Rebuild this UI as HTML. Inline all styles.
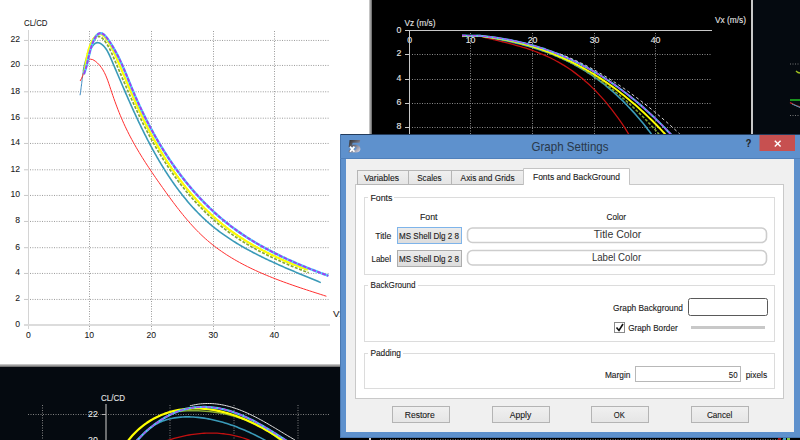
<!DOCTYPE html>
<html><head><meta charset="utf-8"><title>Graph Settings</title>
<style>html,body{margin:0;padding:0;width:800px;height:440px;overflow:hidden;background:#000}svg{display:block}text{font-family:"Liberation Sans", sans-serif}</style>
</head><body>
<svg width="800" height="440" viewBox="0 0 800 440">
<defs>
<linearGradient id="shR" x1="0" x2="1" y1="0" y2="0"><stop offset="0" stop-color="#d8d8d8"/><stop offset="1" stop-color="#606060"/></linearGradient>
<linearGradient id="shB" x1="0" x2="0" y1="0" y2="1"><stop offset="0" stop-color="#d8d8d8"/><stop offset="1" stop-color="#606060"/></linearGradient>
<linearGradient id="tabg" x1="0" x2="0" y1="0" y2="1"><stop offset="0" stop-color="#f0f0f0"/><stop offset="1" stop-color="#e5e5e5"/></linearGradient>
<linearGradient id="btng" x1="0" x2="0" y1="0" y2="1"><stop offset="0" stop-color="#f0f0f0"/><stop offset="1" stop-color="#e5e5e5"/></linearGradient>
<linearGradient id="fbox" x1="0" x2="0" y1="0" y2="1"><stop offset="0" stop-color="#ececec"/><stop offset="1" stop-color="#dcdcdc"/></linearGradient>
<linearGradient id="icon" x1="0" x2="1" y1="0" y2="1"><stop offset="0" stop-color="#2a2a2a"/><stop offset="0.45" stop-color="#6a6a78"/><stop offset="1" stop-color="#dcdcec"/></linearGradient>
</defs>
<rect x="0" y="0" width="800" height="440" fill="#000"/>
<rect x="0" y="0" width="369" height="364" fill="#fff"/>
<rect x="369" y="0" width="3" height="367" fill="url(#shR)"/>
<rect x="0" y="364" width="372" height="3" fill="url(#shB)"/>
<rect x="0" y="367" width="372" height="73" fill="#050a10"/>
<rect x="753" y="0" width="47" height="134" fill="#050a10"/>
<rect x="751" y="0" width="2" height="134" fill="#c8c8c8"/>
<line x1="30" y1="40.45" x2="329" y2="40.45" stroke="#9a9a9a" stroke-width="1" stroke-dasharray="1,1.4"/>
<line x1="24" y1="40.45" x2="28" y2="40.45" stroke="#c8c8c8" stroke-width="1"/>
<text x="20" y="42.45" font-size="9.9" fill="#1a1a1a" text-anchor="end" textLength="9.6" lengthAdjust="spacingAndGlyphs" stroke="#1a1a1a" stroke-width="0.08" >22</text>
<line x1="30" y1="65.45" x2="329" y2="65.45" stroke="#9a9a9a" stroke-width="1" stroke-dasharray="1,1.4"/>
<line x1="24" y1="65.45" x2="28" y2="65.45" stroke="#c8c8c8" stroke-width="1"/>
<text x="20" y="67.45" font-size="9.9" fill="#1a1a1a" text-anchor="end" textLength="9.6" lengthAdjust="spacingAndGlyphs" stroke="#1a1a1a" stroke-width="0.08" >20</text>
<line x1="30" y1="91.80" x2="329" y2="91.80" stroke="#9a9a9a" stroke-width="1" stroke-dasharray="1,1.4"/>
<line x1="24" y1="91.80" x2="28" y2="91.80" stroke="#c8c8c8" stroke-width="1"/>
<text x="20" y="93.8" font-size="9.9" fill="#1a1a1a" text-anchor="end" textLength="9.6" lengthAdjust="spacingAndGlyphs" stroke="#1a1a1a" stroke-width="0.08" >18</text>
<line x1="30" y1="118.20" x2="329" y2="118.20" stroke="#9a9a9a" stroke-width="1" stroke-dasharray="1,1.4"/>
<line x1="24" y1="118.20" x2="28" y2="118.20" stroke="#c8c8c8" stroke-width="1"/>
<text x="20" y="120.2" font-size="9.9" fill="#1a1a1a" text-anchor="end" textLength="9.6" lengthAdjust="spacingAndGlyphs" stroke="#1a1a1a" stroke-width="0.08" >16</text>
<line x1="30" y1="143.45" x2="329" y2="143.45" stroke="#9a9a9a" stroke-width="1" stroke-dasharray="1,1.4"/>
<line x1="24" y1="143.45" x2="28" y2="143.45" stroke="#c8c8c8" stroke-width="1"/>
<text x="20" y="145.45" font-size="9.9" fill="#1a1a1a" text-anchor="end" textLength="9.6" lengthAdjust="spacingAndGlyphs" stroke="#1a1a1a" stroke-width="0.08" >14</text>
<line x1="30" y1="169.80" x2="329" y2="169.80" stroke="#9a9a9a" stroke-width="1" stroke-dasharray="1,1.4"/>
<line x1="24" y1="169.80" x2="28" y2="169.80" stroke="#c8c8c8" stroke-width="1"/>
<text x="20" y="171.8" font-size="9.9" fill="#1a1a1a" text-anchor="end" textLength="9.6" lengthAdjust="spacingAndGlyphs" stroke="#1a1a1a" stroke-width="0.08" >12</text>
<line x1="30" y1="195.45" x2="329" y2="195.45" stroke="#9a9a9a" stroke-width="1" stroke-dasharray="1,1.4"/>
<line x1="24" y1="195.45" x2="28" y2="195.45" stroke="#c8c8c8" stroke-width="1"/>
<text x="20" y="197.45" font-size="9.9" fill="#1a1a1a" text-anchor="end" textLength="9.6" lengthAdjust="spacingAndGlyphs" stroke="#1a1a1a" stroke-width="0.08" >10</text>
<line x1="30" y1="221.45" x2="329" y2="221.45" stroke="#9a9a9a" stroke-width="1" stroke-dasharray="1,1.4"/>
<line x1="24" y1="221.45" x2="28" y2="221.45" stroke="#c8c8c8" stroke-width="1"/>
<text x="20" y="223.45" font-size="9.9" fill="#1a1a1a" text-anchor="end" textLength="4.8" lengthAdjust="spacingAndGlyphs" stroke="#1a1a1a" stroke-width="0.08" >8</text>
<line x1="30" y1="247.70" x2="329" y2="247.70" stroke="#9a9a9a" stroke-width="1" stroke-dasharray="1,1.4"/>
<line x1="24" y1="247.70" x2="28" y2="247.70" stroke="#c8c8c8" stroke-width="1"/>
<text x="20" y="249.7" font-size="9.9" fill="#1a1a1a" text-anchor="end" textLength="4.8" lengthAdjust="spacingAndGlyphs" stroke="#1a1a1a" stroke-width="0.08" >6</text>
<line x1="30" y1="273.45" x2="329" y2="273.45" stroke="#9a9a9a" stroke-width="1" stroke-dasharray="1,1.4"/>
<line x1="24" y1="273.45" x2="28" y2="273.45" stroke="#c8c8c8" stroke-width="1"/>
<text x="20" y="275.45" font-size="9.9" fill="#1a1a1a" text-anchor="end" textLength="4.8" lengthAdjust="spacingAndGlyphs" stroke="#1a1a1a" stroke-width="0.08" >4</text>
<line x1="30" y1="299.45" x2="329" y2="299.45" stroke="#9a9a9a" stroke-width="1" stroke-dasharray="1,1.4"/>
<line x1="24" y1="299.45" x2="28" y2="299.45" stroke="#c8c8c8" stroke-width="1"/>
<text x="20" y="301.45" font-size="9.9" fill="#1a1a1a" text-anchor="end" textLength="4.8" lengthAdjust="spacingAndGlyphs" stroke="#1a1a1a" stroke-width="0.08" >2</text>
<line x1="89.5" y1="31" x2="89.5" y2="330" stroke="#9a9a9a" stroke-width="1" stroke-dasharray="1,1.5"/>
<line x1="151.5" y1="31" x2="151.5" y2="330" stroke="#9a9a9a" stroke-width="1" stroke-dasharray="1,1.5"/>
<line x1="213.5" y1="31" x2="213.5" y2="330" stroke="#9a9a9a" stroke-width="1" stroke-dasharray="1,1.5"/>
<line x1="274.5" y1="31" x2="274.5" y2="330" stroke="#9a9a9a" stroke-width="1" stroke-dasharray="1,1.5"/>
<text x="28.3" y="337.7" font-size="9.9" fill="#1a1a1a" text-anchor="middle" textLength="4.8" lengthAdjust="spacingAndGlyphs" stroke="#1a1a1a" stroke-width="0.08" >0</text>
<text x="89.3" y="337.7" font-size="9.9" fill="#1a1a1a" text-anchor="middle" textLength="9.6" lengthAdjust="spacingAndGlyphs" stroke="#1a1a1a" stroke-width="0.08" >10</text>
<text x="151.3" y="337.7" font-size="9.9" fill="#1a1a1a" text-anchor="middle" textLength="9.6" lengthAdjust="spacingAndGlyphs" stroke="#1a1a1a" stroke-width="0.08" >20</text>
<text x="213.3" y="337.7" font-size="9.9" fill="#1a1a1a" text-anchor="middle" textLength="9.6" lengthAdjust="spacingAndGlyphs" stroke="#1a1a1a" stroke-width="0.08" >30</text>
<text x="274.3" y="337.7" font-size="9.9" fill="#1a1a1a" text-anchor="middle" textLength="9.6" lengthAdjust="spacingAndGlyphs" stroke="#1a1a1a" stroke-width="0.08" >40</text>
<text x="20" y="326.8" font-size="9.9" fill="#1a1a1a" text-anchor="end" textLength="4.8" lengthAdjust="spacingAndGlyphs" stroke="#1a1a1a" stroke-width="0.08" >0</text>
<line x1="28.5" y1="30" x2="28.5" y2="329" stroke="#d4d4d4" stroke-width="1"/>
<rect x="24" y="324" width="306" height="2" fill="#dcdcdc"/>
<text x="24" y="26.2" font-size="9.8" fill="#1a1a1a" text-anchor="start" textLength="23.5" lengthAdjust="spacingAndGlyphs" stroke="#1a1a1a" stroke-width="0.08" >CL/CD</text>
<text x="333" y="317" font-size="9.8" fill="#222" text-anchor="start" stroke="#222" stroke-width="0.08" >Vx</text>
<path d="M83.32,71.40 L83.56,70.04 L83.81,68.69 L84.08,67.34 L84.36,66.00 L84.67,64.66 L85.00,63.33 L85.35,62.01 L85.72,60.70 L86.12,59.39 L86.55,58.10 L87.00,56.82 L87.49,55.55 L88.00,54.30 L88.55,53.06 L89.13,51.84 L89.75,50.63 L90.41,49.44 L91.10,48.27 L91.84,47.12 L92.62,46.00 L93.44,44.97 L94.31,44.06 L95.24,43.34 L96.22,42.85 L97.27,42.66 L98.36,42.77 L99.46,43.10 L100.50,43.56 L101.48,44.13 L102.42,44.81 L103.30,45.59 L104.14,46.46 L104.94,47.41 L105.70,48.44 L106.43,49.53 L107.13,50.68 L107.80,51.88 L108.44,53.12 L109.06,54.40 L109.67,55.70 L110.26,57.02 L110.84,58.36 L111.41,59.69 L111.98,61.02 L112.55,62.35 L113.11,63.67 L113.67,64.98 L114.23,66.28 L114.78,67.58 L115.33,68.88 L115.88,70.17 L116.43,71.45 L116.97,72.73 L117.51,74.00 L118.05,75.27 L118.59,76.53 L119.13,77.79 L119.66,79.05 L120.20,80.30 L120.73,81.54 L121.26,82.78 L121.79,84.02 L122.32,85.26 L122.85,86.49 L123.38,87.72 L123.91,88.94 L124.44,90.16 L124.97,91.38 L125.49,92.59 L126.02,93.81 L126.55,95.02 L127.08,96.23 L127.60,97.43 L128.13,98.64 L128.66,99.84 L129.19,101.04 L129.73,102.24 L130.26,103.44 L130.79,104.63 L131.33,105.83 L131.87,107.02 L132.40,108.22 L132.94,109.41 L133.49,110.61 L134.03,111.80 L134.58,112.99 L135.13,114.18 L135.68,115.38 L136.23,116.57 L136.79,117.76 L137.35,118.96 L137.91,120.15 L138.47,121.35 L139.04,122.55 L139.61,123.74 L140.19,124.94 L140.76,126.14 L141.34,127.33 L141.93,128.53 L142.52,129.73 L143.11,130.93 L143.70,132.13 L144.30,133.32 L144.90,134.52 L145.50,135.72 L146.11,136.91 L146.72,138.11 L147.33,139.30 L147.95,140.50 L148.57,141.69 L149.19,142.88 L149.82,144.07 L150.45,145.26 L151.09,146.45 L151.73,147.64 L152.37,148.82 L153.02,150.01 L153.67,151.19 L154.32,152.37 L154.98,153.55 L155.64,154.73 L156.31,155.90 L156.98,157.08 L157.66,158.25 L158.33,159.42 L159.02,160.59 L159.70,161.75 L160.40,162.91 L161.09,164.07 L161.79,165.23 L162.50,166.39 L163.21,167.54 L163.92,168.69 L164.64,169.83 L165.36,170.98 L166.09,172.12 L166.82,173.25 L167.55,174.39 L168.29,175.52 L169.04,176.64 L169.79,177.77 L170.54,178.89 L171.30,180.00 L172.07,181.11 L172.84,182.22 L173.61,183.33 L174.39,184.43 L175.17,185.52 L175.96,186.61 L176.76,187.70 L177.56,188.78 L178.36,189.86 L179.17,190.94 L179.98,192.01 L180.80,193.07 L181.63,194.13 L182.46,195.18 L183.30,196.23 L184.14,197.28 L184.98,198.32 L185.84,199.35 L186.69,200.38 L187.56,201.40 L188.43,202.42 L189.30,203.43 L190.18,204.44 L191.07,205.44 L191.96,206.43 L192.85,207.42 L193.76,208.40 L194.67,209.38 L195.58,210.35 L196.50,211.31 L197.43,212.27 L198.36,213.22 L199.30,214.17 L200.24,215.10 L201.19,216.03 L202.15,216.96 L203.11,217.88 L204.08,218.79 L205.06,219.69 L206.04,220.58 L207.03,221.47 L208.02,222.35 L209.02,223.23 L210.03,224.09 L211.04,224.95 L212.06,225.80 L213.09,226.65 L214.12,227.48 L215.16,228.31 L216.20,229.13 L217.26,229.95 L218.31,230.75 L219.37,231.55 L220.44,232.34 L221.52,233.13 L222.60,233.91 L223.68,234.68 L224.77,235.45 L225.87,236.20 L226.97,236.96 L228.07,237.70 L229.18,238.44 L230.30,239.18 L231.42,239.90 L232.54,240.63 L233.67,241.34 L234.80,242.05 L235.94,242.75 L237.08,243.45 L238.23,244.14 L239.38,244.83 L240.54,245.51 L241.69,246.19 L242.86,246.86 L244.02,247.52 L245.19,248.18 L246.37,248.84 L247.54,249.49 L248.72,250.13 L249.91,250.77 L251.09,251.41 L252.28,252.04 L253.47,252.67 L254.67,253.29 L255.87,253.91 L257.07,254.52 L258.27,255.13 L259.48,255.74 L260.68,256.34 L261.89,256.94 L263.11,257.53 L264.32,258.12 L265.54,258.70 L266.76,259.29 L267.98,259.87 L269.20,260.44 L270.42,261.01 L271.65,261.58 L272.87,262.15 L274.10,262.71 L275.33,263.27 L276.56,263.83 L277.79,264.38 L279.03,264.93 L280.26,265.48 L281.49,266.02 L282.73,266.57 L283.96,267.11 L285.20,267.65 L286.43,268.18 L287.67,268.72 L288.91,269.25 L290.14,269.78 L291.38,270.31 L292.62,270.83 L293.86,271.36 L295.09,271.88 L296.33,272.40 L297.56,272.92 L298.80,273.44 L300.03,273.96 L301.27,274.47 L302.50,274.99 L303.73,275.50 L304.96,276.01 L306.19,276.52 L307.42,277.03 L308.65,277.54 L309.87,278.05 L311.10,278.56 L312.32,279.07 L313.54,279.58 L314.76,280.09 L315.98,280.59 L317.19,281.10 L318.40,281.61 L319.62,282.12 L320.82,282.62" fill="none" stroke="#3a9ab8" stroke-width="1.6" stroke-linejoin="round" opacity="1"/>
<path d="M80.03,95.22 L80.24,93.98 L80.44,92.72 L80.63,91.44 L80.81,90.16 L80.98,88.86 L81.15,87.55 L81.32,86.24 L81.48,84.91 L81.65,83.58 L81.81,82.24 L81.98,80.89 L82.15,79.54 L82.32,78.19 L82.50,76.83 L82.69,75.47 L82.89,74.12 L83.10,72.76 L83.32,71.40 L83.56,70.04 L83.81,68.69 L84.08,67.34" fill="none" stroke="#3a88c0" stroke-width="1.0" stroke-linejoin="round" opacity="1"/>
<path d="M80.10,80.98 L81.68,78.25 L82.75,75.52 L83.53,72.76 L84.23,69.90 L85.10,66.88 L86.34,63.67 L88.08,60.71 L90.26,59.20 L92.73,59.59 L95.22,61.11 L97.48,63.01 L99.50,65.12 L101.30,67.41 L102.90,69.86 L104.33,72.45 L105.62,75.16 L106.79,77.96 L107.87,80.82 L108.89,83.74 L109.87,86.68 L110.83,89.63 L111.81,92.56 L112.80,95.46 L113.81,98.36 L114.84,101.23 L115.88,104.08 L116.95,106.92 L118.03,109.74 L119.14,112.54 L120.28,115.32 L121.44,118.08 L122.63,120.83 L123.84,123.55 L125.09,126.26 L126.37,128.96 L127.69,131.63 L129.03,134.29 L130.40,136.93 L131.80,139.56 L133.23,142.18 L134.69,144.78 L136.17,147.37 L137.68,149.94 L139.21,152.50 L140.76,155.06 L142.33,157.60 L143.93,160.14 L145.54,162.66 L147.18,165.18 L148.83,167.69 L150.49,170.19 L152.18,172.69 L153.88,175.18 L155.59,177.67 L157.31,180.16 L159.05,182.64 L160.79,185.12 L162.55,187.59 L164.31,190.07 L166.09,192.55 L167.87,195.02 L169.66,197.48 L171.47,199.94 L173.29,202.39 L175.13,204.83 L176.98,207.25 L178.85,209.66 L180.74,212.05 L182.64,214.42 L184.57,216.77 L186.52,219.09 L188.50,221.39 L190.49,223.66 L192.52,225.90 L194.57,228.10 L196.65,230.28 L198.76,232.41 L200.90,234.51 L203.08,236.57 L205.28,238.58 L207.52,240.56 L209.80,242.48 L212.11,244.36 L214.45,246.20 L216.82,248.00 L219.23,249.75 L221.67,251.46 L224.13,253.14 L226.62,254.77 L229.14,256.37 L231.69,257.93 L234.26,259.46 L236.85,260.95 L239.47,262.41 L242.11,263.83 L244.77,265.22 L247.45,266.58 L250.14,267.92 L252.86,269.22 L255.59,270.50 L258.34,271.75 L261.10,272.97 L263.88,274.17 L266.67,275.34 L269.47,276.49 L272.28,277.62 L275.11,278.73 L277.94,279.82 L280.77,280.89 L283.62,281.95 L286.47,282.98 L289.32,284.00 L292.18,285.01 L295.04,286.00 L297.91,286.97 L300.77,287.94 L303.63,288.89 L306.50,289.84 L309.35,290.77 L312.21,291.70 L315.06,292.62 L317.91,293.53 L320.75,294.44 L323.58,295.35 L326.40,296.25" fill="none" stroke="#ff3030" stroke-width="1" stroke-linejoin="round" opacity="1"/>
<path d="M83.45,73.97 L84.32,71.12 L85.07,68.26 L85.72,65.39 L86.33,62.51 L86.93,59.63 L87.56,56.74 L88.27,53.86 L89.10,50.99 L90.09,48.12 L91.28,45.27 L92.72,42.44 L94.43,39.67 L96.37,37.40 L98.44,36.30 L100.56,36.81 L102.63,38.52 L104.57,40.79 L106.32,43.22 L107.92,45.75 L109.38,48.37 L110.73,51.05 L112.00,53.79 L113.21,56.56 L114.40,59.34 L115.57,62.12 L116.75,64.89 L117.92,67.66 L119.09,70.43 L120.26,73.19 L121.43,75.94 L122.61,78.69 L123.79,81.44 L124.96,84.18 L126.15,86.91 L127.34,89.64 L128.53,92.36 L129.73,95.07 L130.94,97.78 L132.15,100.49 L133.38,103.18 L134.61,105.87 L135.85,108.56 L137.11,111.24 L138.37,113.91 L139.65,116.57 L140.94,119.23 L142.25,121.88 L143.57,124.52 L144.91,127.15 L146.26,129.78 L147.63,132.40 L149.02,135.01 L150.43,137.62 L151.85,140.21 L153.30,142.80 L154.77,145.38 L156.26,147.95 L157.77,150.51 L159.30,153.06 L160.85,155.60 L162.42,158.13 L164.02,160.64 L165.63,163.14 L167.27,165.63 L168.93,168.11 L170.61,170.57 L172.32,173.01 L174.04,175.44 L175.79,177.85 L177.56,180.24 L179.36,182.62 L181.17,184.98 L183.01,187.32 L184.88,189.63 L186.76,191.93 L188.67,194.21 L190.61,196.47 L192.56,198.70 L194.54,200.91 L196.55,203.10 L198.58,205.26 L200.63,207.40 L202.71,209.52 L204.81,211.61 L206.94,213.67 L209.09,215.70 L211.27,217.71 L213.48,219.69 L215.70,221.64 L217.96,223.56 L220.24,225.45 L222.54,227.31 L224.87,229.14 L227.23,230.93 L229.61,232.70 L232.02,234.43 L234.46,236.12 L236.92,237.79 L239.40,239.42 L241.91,241.02 L244.44,242.59 L246.98,244.13 L249.55,245.64 L252.14,247.13 L254.74,248.58 L257.36,250.01 L259.99,251.41 L262.64,252.78 L265.30,254.13 L267.97,255.46 L270.65,256.76 L273.35,258.03 L276.05,259.28 L278.76,260.52 L281.47,261.72 L284.19,262.91 L286.91,264.08 L289.64,265.23 L292.37,266.35 L295.09,267.46 L297.82,268.55 L300.55,269.63 L303.28,270.69 L306.00,271.73 L308.71,272.75" fill="none" stroke="#88aa33" stroke-width="1.7" stroke-dasharray="3,1.5" stroke-linejoin="round" opacity="1"/>
<path d="M83.65,73.97 L84.28,71.40 L84.81,68.85 L85.28,66.31 L85.71,63.78 L86.12,61.26 L86.54,58.74 L87.01,56.22 L87.55,53.69 L88.19,51.16 L88.96,48.61 L89.88,46.04 L90.98,43.45 L92.28,40.86 L93.77,38.42 L95.40,36.33 L97.14,34.78 L98.94,33.98 L100.79,34.10 L102.64,35.13 L104.44,36.83 L106.17,38.92 L107.77,41.16 L109.25,43.43 L110.62,45.75 L111.90,48.09 L113.10,50.45 L114.23,52.84 L115.32,55.24 L116.37,57.65 L117.41,60.06 L118.44,62.47 L119.47,64.88 L120.49,67.29 L121.51,69.70 L122.53,72.11 L123.55,74.52 L124.56,76.92 L125.58,79.33 L126.60,81.73 L127.62,84.13 L128.64,86.52 L129.67,88.92 L130.70,91.31 L131.73,93.70 L132.77,96.08 L133.82,98.46 L134.87,100.84 L135.93,103.22 L137.00,105.59 L138.08,107.95 L139.17,110.32 L140.27,112.67 L141.39,115.03 L142.51,117.38 L143.65,119.72 L144.80,122.06 L145.97,124.39 L147.15,126.72 L148.34,129.04 L149.55,131.36 L150.77,133.66 L152.01,135.97 L153.26,138.26 L154.53,140.54 L155.81,142.82 L157.11,145.09 L158.42,147.35 L159.75,149.60 L161.09,151.84 L162.45,154.07 L163.82,156.29 L165.21,158.50 L166.62,160.70 L168.04,162.88 L169.48,165.06 L170.94,167.22 L172.41,169.37 L173.90,171.51 L175.41,173.63 L176.93,175.74 L178.47,177.84 L180.03,179.92 L181.61,181.99 L183.20,184.05 L184.81,186.09 L186.44,188.11 L188.09,190.12 L189.75,192.11 L191.44,194.08 L193.14,196.04 L194.86,197.98 L196.60,199.90 L198.36,201.81 L200.14,203.70 L201.94,205.56 L203.76,207.41 L205.59,209.24 L207.45,211.05 L209.32,212.84 L211.22,214.61 L213.14,216.36 L215.07,218.09 L217.03,219.80 L219.01,221.48 L221.01,223.14 L223.03,224.78 L225.07,226.40 L227.13,228.00 L229.21,229.57 L231.31,231.11 L233.44,232.64 L235.58,234.14 L237.75,235.61 L239.93,237.06 L242.14,238.49 L244.36,239.90 L246.60,241.28 L248.85,242.64 L251.12,243.98 L253.40,245.29 L255.69,246.58 L258.00,247.85 L260.32,249.10 L262.65,250.33 L264.99,251.54 L267.34,252.72 L269.70,253.88 L272.06,255.03 L274.43,256.15 L276.81,257.25 L279.19,258.33 L281.57,259.40 L283.96,260.44 L286.35,261.46 L288.75,262.46 L291.14,263.45 L293.53,264.41 L295.93,265.36 L298.32,266.28 L300.71,267.19 L303.09,268.08 L305.47,268.96 L307.85,269.81" fill="none" stroke="#2040a0" stroke-width="1.5" stroke-dasharray="2,2" stroke-linejoin="round" opacity="1"/>
<path d="M83.65,73.97 L84.28,71.40 L84.81,68.85 L85.28,66.31 L85.71,63.78 L86.12,61.26 L86.54,58.74 L87.01,56.22 L87.55,53.69 L88.19,51.16 L88.96,48.61 L89.88,46.04 L90.98,43.45 L92.28,40.86 L93.77,38.42 L95.40,36.33 L97.14,34.78 L98.94,33.98 L100.79,34.10 L102.64,35.13 L104.44,36.83 L106.17,38.92 L107.77,41.16 L109.25,43.43 L110.62,45.75 L111.90,48.09 L113.10,50.45 L114.23,52.84 L115.32,55.24 L116.37,57.65 L117.41,60.06 L118.44,62.47 L119.47,64.88 L120.49,67.29 L121.51,69.70 L122.53,72.11 L123.55,74.52 L124.56,76.92 L125.58,79.33 L126.60,81.73 L127.62,84.13 L128.64,86.52 L129.67,88.92 L130.70,91.31 L131.73,93.70 L132.77,96.08 L133.82,98.46 L134.87,100.84 L135.93,103.22 L137.00,105.59 L138.08,107.95 L139.17,110.32 L140.27,112.67 L141.39,115.03 L142.51,117.38 L143.65,119.72 L144.80,122.06 L145.97,124.39 L147.15,126.72 L148.34,129.04 L149.55,131.36 L150.77,133.66 L152.01,135.97 L153.26,138.26 L154.53,140.54 L155.81,142.82 L157.11,145.09 L158.42,147.35 L159.75,149.60 L161.09,151.84 L162.45,154.07 L163.82,156.29 L165.21,158.50 L166.62,160.70 L168.04,162.88 L169.48,165.06 L170.94,167.22 L172.41,169.37 L173.90,171.51 L175.41,173.63 L176.93,175.74 L178.47,177.84 L180.03,179.92 L181.61,181.99 L183.20,184.05 L184.81,186.09 L186.44,188.11 L188.09,190.12 L189.75,192.11 L191.44,194.08 L193.14,196.04 L194.86,197.98 L196.60,199.90 L198.36,201.81 L200.14,203.70 L201.94,205.56 L203.76,207.41 L205.59,209.24 L207.45,211.05 L209.32,212.84 L211.22,214.61 L213.14,216.36 L215.07,218.09 L217.03,219.80 L219.01,221.48 L221.01,223.14 L223.03,224.78 L225.07,226.40 L227.13,228.00 L229.21,229.57 L231.31,231.11 L233.44,232.64 L235.58,234.14 L237.75,235.61 L239.93,237.06 L242.14,238.49 L244.36,239.90 L246.60,241.28 L248.85,242.64 L251.12,243.98 L253.40,245.29 L255.69,246.58 L258.00,247.85 L260.32,249.10 L262.65,250.33 L264.99,251.54 L267.34,252.72 L269.70,253.88 L272.06,255.03 L274.43,256.15 L276.81,257.25 L279.19,258.33 L281.57,259.40 L283.96,260.44 L286.35,261.46 L288.75,262.46 L291.14,263.45 L293.53,264.41 L295.93,265.36 L298.32,266.28 L300.71,267.19 L303.09,268.08 L305.47,268.96 L307.85,269.81" fill="none" stroke="#ffff00" stroke-width="2.1" stroke-linejoin="round" opacity="1"/>
<path d="M83.91,74.06 L84.91,71.30 L85.75,68.67 L86.47,66.16 L87.09,63.72 L87.65,61.33 L88.19,58.96 L88.73,56.57 L89.30,54.13 L89.93,51.62 L90.67,48.99 L91.53,46.23 L92.54,43.33 L93.72,40.45 L95.06,37.79 L96.56,35.57 L98.21,33.97 L100.01,33.21 L101.82,33.37 L103.59,34.36 L105.33,35.96 L107.01,37.99 L108.63,40.25 L110.18,42.57 L111.67,44.90 L113.09,47.24 L114.46,49.58 L115.77,51.94 L117.03,54.31 L118.24,56.68 L119.42,59.06 L120.55,61.45 L121.65,63.84 L122.72,66.23 L123.77,68.63 L124.79,71.04 L125.80,73.45 L126.79,75.86 L127.78,78.27 L128.76,80.68 L129.74,83.09 L130.72,85.50 L131.71,87.91 L132.72,90.32 L133.73,92.73 L134.77,95.14 L135.81,97.54 L136.88,99.94 L137.95,102.34 L139.05,104.73 L140.15,107.12 L141.28,109.50 L142.41,111.88 L143.57,114.25 L144.73,116.62 L145.92,118.98 L147.12,121.34 L148.33,123.69 L149.56,126.03 L150.81,128.37 L152.07,130.70 L153.34,133.02 L154.64,135.33 L155.95,137.64 L157.27,139.93 L158.61,142.22 L159.97,144.50 L161.34,146.77 L162.73,149.02 L164.14,151.27 L165.56,153.51 L167.00,155.73 L168.45,157.95 L169.92,160.15 L171.41,162.34 L172.92,164.52 L174.44,166.68 L175.97,168.83 L177.53,170.97 L179.10,173.10 L180.69,175.21 L182.30,177.31 L183.92,179.39 L185.56,181.45 L187.22,183.51 L188.89,185.54 L190.59,187.56 L192.30,189.57 L194.02,191.55 L195.77,193.52 L197.53,195.47 L199.31,197.41 L201.11,199.32 L202.92,201.22 L204.76,203.10 L206.61,204.96 L208.48,206.80 L210.37,208.63 L212.27,210.43 L214.20,212.21 L216.14,213.97 L218.10,215.71 L220.08,217.43 L222.08,219.12 L224.10,220.80 L226.13,222.45 L228.19,224.08 L230.26,225.68 L232.35,227.27 L234.46,228.83 L236.59,230.36 L238.74,231.88 L240.90,233.37 L243.08,234.84 L245.27,236.29 L247.48,237.71 L249.71,239.12 L251.95,240.50 L254.21,241.87 L256.47,243.21 L258.75,244.54 L261.05,245.84 L263.35,247.13 L265.67,248.40 L268.00,249.65 L270.34,250.88 L272.69,252.09 L275.05,253.28 L277.42,254.46 L279.79,255.62 L282.18,256.77 L284.57,257.90 L286.97,259.01 L289.38,260.11 L291.79,261.19 L294.21,262.25 L296.63,263.31 L299.06,264.34 L301.49,265.37 L303.93,266.38 L306.36,267.37 L308.81,268.35 L311.25,269.33 L313.70,270.28 L316.14,271.23 L318.59,272.16 L321.04,273.08 L323.48,274.00 L325.93,274.90 L328.38,275.79" fill="none" stroke="#40e0ff" stroke-width="2.5" stroke-linejoin="round" opacity="1"/>
<path d="M83.91,74.06 L84.91,71.30 L85.75,68.67 L86.47,66.16 L87.09,63.72 L87.65,61.33 L88.19,58.96 L88.73,56.57 L89.30,54.13 L89.93,51.62 L90.67,48.99 L91.53,46.23 L92.54,43.33 L93.72,40.45 L95.06,37.79 L96.56,35.57 L98.21,33.97 L100.01,33.21 L101.82,33.37 L103.59,34.36 L105.33,35.96 L107.01,37.99 L108.63,40.25 L110.18,42.57 L111.67,44.90 L113.09,47.24 L114.46,49.58 L115.77,51.94 L117.03,54.31 L118.24,56.68 L119.42,59.06 L120.55,61.45 L121.65,63.84 L122.72,66.23 L123.77,68.63 L124.79,71.04 L125.80,73.45 L126.79,75.86 L127.78,78.27 L128.76,80.68 L129.74,83.09 L130.72,85.50 L131.71,87.91 L132.72,90.32 L133.73,92.73 L134.77,95.14 L135.81,97.54 L136.88,99.94 L137.95,102.34 L139.05,104.73 L140.15,107.12 L141.28,109.50 L142.41,111.88 L143.57,114.25 L144.73,116.62 L145.92,118.98 L147.12,121.34 L148.33,123.69 L149.56,126.03 L150.81,128.37 L152.07,130.70 L153.34,133.02 L154.64,135.33 L155.95,137.64 L157.27,139.93 L158.61,142.22 L159.97,144.50 L161.34,146.77 L162.73,149.02 L164.14,151.27 L165.56,153.51 L167.00,155.73 L168.45,157.95 L169.92,160.15 L171.41,162.34 L172.92,164.52 L174.44,166.68 L175.97,168.83 L177.53,170.97 L179.10,173.10 L180.69,175.21 L182.30,177.31 L183.92,179.39 L185.56,181.45 L187.22,183.51 L188.89,185.54 L190.59,187.56 L192.30,189.57 L194.02,191.55 L195.77,193.52 L197.53,195.47 L199.31,197.41 L201.11,199.32 L202.92,201.22 L204.76,203.10 L206.61,204.96 L208.48,206.80 L210.37,208.63 L212.27,210.43 L214.20,212.21 L216.14,213.97 L218.10,215.71 L220.08,217.43 L222.08,219.12 L224.10,220.80 L226.13,222.45 L228.19,224.08 L230.26,225.68 L232.35,227.27 L234.46,228.83 L236.59,230.36 L238.74,231.88 L240.90,233.37 L243.08,234.84 L245.27,236.29 L247.48,237.71 L249.71,239.12 L251.95,240.50 L254.21,241.87 L256.47,243.21 L258.75,244.54 L261.05,245.84 L263.35,247.13 L265.67,248.40 L268.00,249.65 L270.34,250.88 L272.69,252.09 L275.05,253.28 L277.42,254.46 L279.79,255.62 L282.18,256.77 L284.57,257.90 L286.97,259.01 L289.38,260.11 L291.79,261.19 L294.21,262.25 L296.63,263.31 L299.06,264.34 L301.49,265.37 L303.93,266.38 L306.36,267.37 L308.81,268.35 L311.25,269.33 L313.70,270.28 L316.14,271.23 L318.59,272.16 L321.04,273.08 L323.48,274.00 L325.93,274.90 L328.38,275.79" fill="none" stroke="#a040f0" stroke-width="1.9" stroke-dasharray="4,1.2" stroke-linejoin="round" opacity="1"/>
<line x1="412" y1="54.5" x2="711" y2="54.5" stroke="#8a8a8a" stroke-width="1" stroke-dasharray="1,1.5"/>
<line x1="405" y1="54.5" x2="410" y2="54.5" stroke="#c8c8c8" stroke-width="1"/>
<text x="401.5" y="56.1" font-size="9.5" fill="#e8e8e8" text-anchor="end" textLength="4.9" lengthAdjust="spacingAndGlyphs" stroke="#e8e8e8" stroke-width="0.1" >2</text>
<line x1="412" y1="79.5" x2="711" y2="79.5" stroke="#8a8a8a" stroke-width="1" stroke-dasharray="1,1.5"/>
<line x1="405" y1="79.5" x2="410" y2="79.5" stroke="#c8c8c8" stroke-width="1"/>
<text x="401.5" y="81.1" font-size="9.5" fill="#e8e8e8" text-anchor="end" textLength="4.9" lengthAdjust="spacingAndGlyphs" stroke="#e8e8e8" stroke-width="0.1" >4</text>
<line x1="412" y1="103.5" x2="711" y2="103.5" stroke="#8a8a8a" stroke-width="1" stroke-dasharray="1,1.5"/>
<line x1="405" y1="103.5" x2="410" y2="103.5" stroke="#c8c8c8" stroke-width="1"/>
<text x="401.5" y="105.1" font-size="9.5" fill="#e8e8e8" text-anchor="end" textLength="4.9" lengthAdjust="spacingAndGlyphs" stroke="#e8e8e8" stroke-width="0.1" >6</text>
<line x1="412" y1="127.5" x2="711" y2="127.5" stroke="#8a8a8a" stroke-width="1" stroke-dasharray="1,1.5"/>
<line x1="405" y1="127.5" x2="410" y2="127.5" stroke="#c8c8c8" stroke-width="1"/>
<text x="401.5" y="129.1" font-size="9.5" fill="#e8e8e8" text-anchor="end" textLength="4.9" lengthAdjust="spacingAndGlyphs" stroke="#e8e8e8" stroke-width="0.1" >8</text>
<text x="401.5" y="32.8" font-size="9.5" fill="#e8e8e8" text-anchor="end" textLength="4.9" lengthAdjust="spacingAndGlyphs" stroke="#e8e8e8" stroke-width="0.1" >0</text>
<line x1="470.5" y1="33" x2="470.5" y2="134" stroke="#8a8a8a" stroke-width="1" stroke-dasharray="1,1.5"/>
<line x1="532.5" y1="33" x2="532.5" y2="134" stroke="#8a8a8a" stroke-width="1" stroke-dasharray="1,1.5"/>
<line x1="594.5" y1="33" x2="594.5" y2="134" stroke="#8a8a8a" stroke-width="1" stroke-dasharray="1,1.5"/>
<line x1="655.5" y1="33" x2="655.5" y2="134" stroke="#8a8a8a" stroke-width="1" stroke-dasharray="1,1.5"/>
<text x="409.6" y="43" font-size="9.5" fill="#e8e8e8" text-anchor="middle" textLength="4.9" lengthAdjust="spacingAndGlyphs" stroke="#e8e8e8" stroke-width="0.1" >0</text>
<text x="470.6" y="43" font-size="9.5" fill="#e8e8e8" text-anchor="middle" textLength="9.8" lengthAdjust="spacingAndGlyphs" stroke="#e8e8e8" stroke-width="0.1" >10</text>
<text x="532.6" y="43" font-size="9.5" fill="#e8e8e8" text-anchor="middle" textLength="9.8" lengthAdjust="spacingAndGlyphs" stroke="#e8e8e8" stroke-width="0.1" >20</text>
<text x="594.6" y="43" font-size="9.5" fill="#e8e8e8" text-anchor="middle" textLength="9.8" lengthAdjust="spacingAndGlyphs" stroke="#e8e8e8" stroke-width="0.1" >30</text>
<text x="655.6" y="43" font-size="9.5" fill="#e8e8e8" text-anchor="middle" textLength="9.8" lengthAdjust="spacingAndGlyphs" stroke="#e8e8e8" stroke-width="0.1" >40</text>
<line x1="409.5" y1="30" x2="409.5" y2="134" stroke="#c8c8c8" stroke-width="1"/>
<line x1="405" y1="30.5" x2="712" y2="30.5" stroke="#c8c8c8" stroke-width="1"/>
<text x="404.5" y="26" font-size="9.5" fill="#e8e8e8" text-anchor="start" textLength="31" lengthAdjust="spacingAndGlyphs" stroke="#e8e8e8" stroke-width="0.1" >Vz (m/s)</text>
<text x="715" y="23" font-size="9.5" fill="#e8e8e8" text-anchor="start" textLength="31" lengthAdjust="spacingAndGlyphs" stroke="#e8e8e8" stroke-width="0.1" >Vx (m/s)</text>
<path d="M462.00,36.50 C465.00,36.47 476.50,36.23 480.00,36.33 C483.50,36.42 482.00,36.82 483.00,37.07 C484.00,37.31 485.00,37.55 486.00,37.79 C487.00,38.03 488.00,38.27 489.00,38.51 C490.00,38.75 491.00,38.99 492.00,39.22 C493.00,39.46 494.00,39.70 495.00,39.94 C496.00,40.18 497.00,40.42 498.00,40.66 C499.00,40.90 500.00,41.14 501.00,41.38 C502.00,41.63 503.00,41.87 504.00,42.12 C505.00,42.37 506.00,42.62 507.00,42.87 C508.00,43.12 509.00,43.38 510.00,43.64 C511.00,43.90 512.00,44.17 513.00,44.44 C514.00,44.71 515.00,44.98 516.00,45.26 C517.00,45.54 518.00,45.82 519.00,46.12 C520.00,46.41 521.00,46.70 522.00,47.01 C523.00,47.31 524.00,47.62 525.00,47.93 C526.00,48.25 527.00,48.57 528.00,48.91 C529.00,49.24 530.00,49.58 531.00,49.93 C532.00,50.28 533.00,50.63 534.00,51.00 C535.00,51.36 536.00,51.74 537.00,52.12 C538.00,52.51 539.00,52.90 540.00,53.31 C541.00,53.72 542.00,54.13 543.00,54.56 C544.00,54.99 545.00,55.43 546.00,55.88 C547.00,56.33 548.00,56.79 549.00,57.26 C550.00,57.74 551.00,58.22 552.00,58.73 C553.00,59.23 554.00,59.74 555.00,60.27 C556.00,60.79 557.00,61.34 558.00,61.89 C559.00,62.45 560.00,63.02 561.00,63.60 C562.00,64.19 563.00,64.79 564.00,65.41 C565.00,66.02 566.00,66.65 567.00,67.30 C568.00,67.95 569.00,68.62 570.00,69.30 C571.00,69.98 572.00,70.68 573.00,71.40 C574.00,72.12 575.00,72.85 576.00,73.61 C577.00,74.36 578.00,75.13 579.00,75.92 C580.00,76.72 581.00,77.53 582.00,78.36 C583.00,79.19 584.00,80.04 585.00,80.91 C586.00,81.78 587.00,82.67 588.00,83.58 C589.00,84.49 590.00,85.43 591.00,86.38 C592.00,87.34 593.00,88.31 594.00,89.31 C595.00,90.31 596.00,91.33 597.00,92.38 C598.00,93.42 599.00,94.49 600.00,95.58 C601.00,96.68 602.00,97.79 603.00,98.93 C604.00,100.07 605.00,101.24 606.00,102.42 C607.00,103.61 608.00,104.83 609.00,106.07 C610.00,107.31 611.00,108.58 612.00,109.87 C613.00,111.16 614.00,112.48 615.00,113.83 C616.00,115.17 617.00,116.54 618.00,117.95 C619.00,119.35 620.00,120.78 621.00,122.23 C622.00,123.69 623.00,125.17 624.00,126.69 C625.00,128.20 626.00,129.75 627.00,131.32 C628.00,132.89 629.33,135.05 630.00,136.13 C630.67,137.21 630.83,137.50 631.00,137.77" fill="none" stroke="#c01010" stroke-width="1.3" stroke-linejoin="round" opacity="1"/>
<path d="M462.00,36.00 C465.00,35.93 476.50,35.55 480.00,35.58 C483.50,35.60 482.00,35.96 483.00,36.16 C484.00,36.35 485.00,36.54 486.00,36.73 C487.00,36.93 488.00,37.12 489.00,37.32 C490.00,37.51 491.00,37.71 492.00,37.91 C493.00,38.11 494.00,38.30 495.00,38.50 C496.00,38.71 497.00,38.91 498.00,39.11 C499.00,39.32 500.00,39.52 501.00,39.73 C502.00,39.94 503.00,40.15 504.00,40.37 C505.00,40.58 506.00,40.80 507.00,41.02 C508.00,41.24 509.00,41.46 510.00,41.69 C511.00,41.92 512.00,42.15 513.00,42.38 C514.00,42.62 515.00,42.86 516.00,43.10 C517.00,43.34 518.00,43.59 519.00,43.84 C520.00,44.09 521.00,44.35 522.00,44.61 C523.00,44.87 524.00,45.13 525.00,45.40 C526.00,45.67 527.00,45.95 528.00,46.23 C529.00,46.51 530.00,46.80 531.00,47.09 C532.00,47.39 533.00,47.69 534.00,47.99 C535.00,48.30 536.00,48.61 537.00,48.93 C538.00,49.25 539.00,49.57 540.00,49.91 C541.00,50.24 542.00,50.58 543.00,50.92 C544.00,51.27 545.00,51.63 546.00,51.99 C547.00,52.35 548.00,52.72 549.00,53.10 C550.00,53.47 551.00,53.86 552.00,54.25 C553.00,54.65 554.00,55.05 555.00,55.46 C556.00,55.87 557.00,56.29 558.00,56.72 C559.00,57.15 560.00,57.59 561.00,58.04 C562.00,58.49 563.00,58.95 564.00,59.41 C565.00,59.88 566.00,60.36 567.00,60.85 C568.00,61.33 569.00,61.83 570.00,62.34 C571.00,62.85 572.00,63.37 573.00,63.90 C574.00,64.43 575.00,64.97 576.00,65.52 C577.00,66.07 578.00,66.64 579.00,67.21 C580.00,67.79 581.00,68.37 582.00,68.97 C583.00,69.57 584.00,70.18 585.00,70.80 C586.00,71.43 587.00,72.06 588.00,72.71 C589.00,73.36 590.00,74.02 591.00,74.69 C592.00,75.37 593.00,76.05 594.00,76.75 C595.00,77.45 596.00,78.17 597.00,78.89 C598.00,79.62 599.00,80.36 600.00,81.12 C601.00,81.87 602.00,82.64 603.00,83.43 C604.00,84.21 605.00,85.01 606.00,85.82 C607.00,86.63 608.00,87.46 609.00,88.30 C610.00,89.15 611.00,90.00 612.00,90.88 C613.00,91.75 614.00,92.64 615.00,93.55 C616.00,94.45 617.00,95.37 618.00,96.31 C619.00,97.25 620.00,98.20 621.00,99.17 C622.00,100.14 623.00,101.12 624.00,102.13 C625.00,103.13 626.00,104.15 627.00,105.19 C628.00,106.23 629.00,107.28 630.00,108.35 C631.00,109.43 632.00,110.52 633.00,111.62 C634.00,112.73 635.00,113.86 636.00,115.00 C637.00,116.15 638.00,117.31 639.00,118.49 C640.00,119.67 641.00,120.87 642.00,122.09 C643.00,123.31 644.00,124.55 645.00,125.81 C646.00,127.07 647.00,128.34 648.00,129.64 C649.00,130.94 650.17,132.48 651.00,133.59 C651.83,134.70 652.67,135.84 653.00,136.29" fill="none" stroke="#3a9ab8" stroke-width="1.6" stroke-linejoin="round" opacity="1"/>
<path d="M462.00,36.00 C465.00,36.00 476.50,35.91 480.00,35.97 C483.50,36.03 482.00,36.23 483.00,36.36 C484.00,36.50 485.00,36.64 486.00,36.78 C487.00,36.92 488.00,37.07 489.00,37.22 C490.00,37.38 491.00,37.53 492.00,37.69 C493.00,37.86 494.00,38.02 495.00,38.19 C496.00,38.36 497.00,38.54 498.00,38.72 C499.00,38.90 500.00,39.09 501.00,39.28 C502.00,39.47 503.00,39.66 504.00,39.87 C505.00,40.07 506.00,40.27 507.00,40.49 C508.00,40.70 509.00,40.91 510.00,41.14 C511.00,41.36 512.00,41.59 513.00,41.82 C514.00,42.06 515.00,42.30 516.00,42.54 C517.00,42.79 518.00,43.04 519.00,43.30 C520.00,43.56 521.00,43.82 522.00,44.09 C523.00,44.36 524.00,44.64 525.00,44.92 C526.00,45.20 527.00,45.49 528.00,45.79 C529.00,46.08 530.00,46.38 531.00,46.69 C532.00,47.00 533.00,47.31 534.00,47.64 C535.00,47.96 536.00,48.29 537.00,48.62 C538.00,48.96 539.00,49.30 540.00,49.65 C541.00,50.00 542.00,50.36 543.00,50.72 C544.00,51.08 545.00,51.46 546.00,51.83 C547.00,52.21 548.00,52.60 549.00,52.99 C550.00,53.39 551.00,53.79 552.00,54.20 C553.00,54.60 554.00,55.02 555.00,55.45 C556.00,55.87 557.00,56.30 558.00,56.74 C559.00,57.18 560.00,57.63 561.00,58.09 C562.00,58.54 563.00,59.01 564.00,59.48 C565.00,59.95 566.00,60.43 567.00,60.92 C568.00,61.41 569.00,61.91 570.00,62.42 C571.00,62.92 572.00,63.44 573.00,63.96 C574.00,64.49 575.00,65.02 576.00,65.56 C577.00,66.10 578.00,66.65 579.00,67.21 C580.00,67.77 581.00,68.34 582.00,68.92 C583.00,69.50 584.00,70.08 585.00,70.68 C586.00,71.28 587.00,71.88 588.00,72.50 C589.00,73.11 590.00,73.74 591.00,74.37 C592.00,75.01 593.00,75.65 594.00,76.30 C595.00,76.96 596.00,77.62 597.00,78.29 C598.00,78.97 599.00,79.65 600.00,80.35 C601.00,81.04 602.00,81.74 603.00,82.46 C604.00,83.17 605.00,83.90 606.00,84.63 C607.00,85.36 608.00,86.11 609.00,86.87 C610.00,87.62 611.00,88.39 612.00,89.16 C613.00,89.94 614.00,90.73 615.00,91.53 C616.00,92.33 617.00,93.14 618.00,93.96 C619.00,94.78 620.00,95.61 621.00,96.45 C622.00,97.29 623.00,98.15 624.00,99.01 C625.00,99.88 626.00,100.75 627.00,101.64 C628.00,102.53 629.00,103.43 630.00,104.34 C631.00,105.25 632.00,106.17 633.00,107.11 C634.00,108.04 635.00,108.99 636.00,109.95 C637.00,110.90 638.00,111.87 639.00,112.86 C640.00,113.84 641.00,114.83 642.00,115.84 C643.00,116.85 644.00,117.86 645.00,118.90 C646.00,119.93 647.00,120.97 648.00,122.03 C649.00,123.08 650.00,124.15 651.00,125.23 C652.00,126.31 653.00,127.41 654.00,128.51 C655.00,129.62 656.00,130.74 657.00,131.87 C658.00,133.00 659.50,134.73 660.00,135.31" fill="none" stroke="#88aa33" stroke-width="1.5" stroke-dasharray="3,1.5" stroke-linejoin="round" opacity="1"/>
<path d="M462.00,36.00 C465.00,36.00 476.50,35.94 480.00,35.99 C483.50,36.04 482.00,36.21 483.00,36.33 C484.00,36.45 485.00,36.57 486.00,36.70 C487.00,36.82 488.00,36.96 489.00,37.09 C490.00,37.23 491.00,37.37 492.00,37.52 C493.00,37.67 494.00,37.82 495.00,37.98 C496.00,38.14 497.00,38.30 498.00,38.47 C499.00,38.64 500.00,38.81 501.00,38.99 C502.00,39.17 503.00,39.35 504.00,39.54 C505.00,39.73 506.00,39.93 507.00,40.13 C508.00,40.33 509.00,40.54 510.00,40.75 C511.00,40.96 512.00,41.18 513.00,41.40 C514.00,41.63 515.00,41.86 516.00,42.09 C517.00,42.33 518.00,42.57 519.00,42.82 C520.00,43.07 521.00,43.32 522.00,43.58 C523.00,43.84 524.00,44.10 525.00,44.38 C526.00,44.65 527.00,44.93 528.00,45.21 C529.00,45.50 530.00,45.79 531.00,46.09 C532.00,46.38 533.00,46.69 534.00,47.00 C535.00,47.31 536.00,47.63 537.00,47.95 C538.00,48.27 539.00,48.60 540.00,48.94 C541.00,49.28 542.00,49.62 543.00,49.97 C544.00,50.32 545.00,50.68 546.00,51.05 C547.00,51.41 548.00,51.78 549.00,52.16 C550.00,52.54 551.00,52.93 552.00,53.32 C553.00,53.71 554.00,54.11 555.00,54.52 C556.00,54.93 557.00,55.34 558.00,55.77 C559.00,56.19 560.00,56.62 561.00,57.06 C562.00,57.49 563.00,57.94 564.00,58.39 C565.00,58.84 566.00,59.30 567.00,59.77 C568.00,60.24 569.00,60.71 570.00,61.20 C571.00,61.68 572.00,62.17 573.00,62.67 C574.00,63.17 575.00,63.67 576.00,64.19 C577.00,64.70 578.00,65.23 579.00,65.76 C580.00,66.29 581.00,66.83 582.00,67.38 C583.00,67.92 584.00,68.48 585.00,69.04 C586.00,69.61 587.00,70.18 588.00,70.76 C589.00,71.34 590.00,71.93 591.00,72.53 C592.00,73.13 593.00,73.73 594.00,74.35 C595.00,74.96 596.00,75.59 597.00,76.22 C598.00,76.85 599.00,77.49 600.00,78.14 C601.00,78.79 602.00,79.45 603.00,80.12 C604.00,80.79 605.00,81.46 606.00,82.15 C607.00,82.84 608.00,83.53 609.00,84.23 C610.00,84.94 611.00,85.65 612.00,86.37 C613.00,87.10 614.00,87.83 615.00,88.57 C616.00,89.31 617.00,90.06 618.00,90.82 C619.00,91.58 620.00,92.35 621.00,93.13 C622.00,93.91 623.00,94.70 624.00,95.50 C625.00,96.30 626.00,97.11 627.00,97.92 C628.00,98.74 629.00,99.57 630.00,100.41 C631.00,101.25 632.00,102.09 633.00,102.95 C634.00,103.81 635.00,104.68 636.00,105.56 C637.00,106.43 638.00,107.32 639.00,108.22 C640.00,109.12 641.00,110.03 642.00,110.95 C643.00,111.86 644.00,112.79 645.00,113.73 C646.00,114.67 647.00,115.62 648.00,116.58 C649.00,117.54 650.00,118.52 651.00,119.50 C652.00,120.48 653.00,121.47 654.00,122.48 C655.00,123.48 656.00,124.49 657.00,125.52 C658.00,126.54 659.00,127.58 660.00,128.63 C661.00,129.67 662.00,130.73 663.00,131.80 C664.00,132.87 665.50,134.50 666.00,135.04" fill="none" stroke="#ffff00" stroke-width="1.9" stroke-linejoin="round" opacity="1"/>
<path d="M462.00,35.50 C465.00,35.56 476.50,35.73 480.00,35.84 C483.50,35.94 482.00,36.02 483.00,36.11 C484.00,36.21 485.00,36.32 486.00,36.42 C487.00,36.53 488.00,36.64 489.00,36.76 C490.00,36.88 491.00,37.00 492.00,37.13 C493.00,37.26 494.00,37.39 495.00,37.53 C496.00,37.67 497.00,37.81 498.00,37.96 C499.00,38.11 500.00,38.26 501.00,38.42 C502.00,38.58 503.00,38.75 504.00,38.92 C505.00,39.09 506.00,39.27 507.00,39.45 C508.00,39.63 509.00,39.82 510.00,40.01 C511.00,40.20 512.00,40.40 513.00,40.61 C514.00,40.81 515.00,41.02 516.00,41.24 C517.00,41.45 518.00,41.68 519.00,41.90 C520.00,42.13 521.00,42.36 522.00,42.60 C523.00,42.84 524.00,43.09 525.00,43.34 C526.00,43.60 527.00,43.85 528.00,44.12 C529.00,44.38 530.00,44.65 531.00,44.93 C532.00,45.21 533.00,45.49 534.00,45.78 C535.00,46.07 536.00,46.37 537.00,46.67 C538.00,46.97 539.00,47.28 540.00,47.60 C541.00,47.92 542.00,48.24 543.00,48.57 C544.00,48.90 545.00,49.23 546.00,49.58 C547.00,49.92 548.00,50.27 549.00,50.62 C550.00,50.98 551.00,51.34 552.00,51.71 C553.00,52.08 554.00,52.46 555.00,52.85 C556.00,53.23 557.00,53.62 558.00,54.02 C559.00,54.42 560.00,54.83 561.00,55.24 C562.00,55.65 563.00,56.07 564.00,56.50 C565.00,56.93 566.00,57.36 567.00,57.80 C568.00,58.25 569.00,58.70 570.00,59.15 C571.00,59.61 572.00,60.08 573.00,60.55 C574.00,61.02 575.00,61.50 576.00,61.99 C577.00,62.48 578.00,62.97 579.00,63.48 C580.00,63.98 581.00,64.49 582.00,65.01 C583.00,65.53 584.00,66.06 585.00,66.59 C586.00,67.13 587.00,67.67 588.00,68.22 C589.00,68.77 590.00,69.33 591.00,69.90 C592.00,70.47 593.00,71.04 594.00,71.63 C595.00,72.21 596.00,72.80 597.00,73.40 C598.00,74.00 599.00,74.61 600.00,75.23 C601.00,75.85 602.00,76.47 603.00,77.11 C604.00,77.74 605.00,78.38 606.00,79.03 C607.00,79.69 608.00,80.35 609.00,81.01 C610.00,81.68 611.00,82.36 612.00,83.05 C613.00,83.73 614.00,84.43 615.00,85.13 C616.00,85.84 617.00,86.55 618.00,87.27 C619.00,87.99 620.00,88.72 621.00,89.46 C622.00,90.20 623.00,90.95 624.00,91.71 C625.00,92.47 626.00,93.24 627.00,94.01 C628.00,94.79 629.00,95.58 630.00,96.37 C631.00,97.17 632.00,97.97 633.00,98.79 C634.00,99.60 635.00,100.42 636.00,101.26 C637.00,102.09 638.00,102.93 639.00,103.79 C640.00,104.64 641.00,105.50 642.00,106.37 C643.00,107.25 644.00,108.13 645.00,109.02 C646.00,109.91 647.00,110.81 648.00,111.72 C649.00,112.63 650.00,113.55 651.00,114.49 C652.00,115.42 653.00,116.36 654.00,117.31 C655.00,118.26 656.00,119.22 657.00,120.19 C658.00,121.17 659.00,122.15 660.00,123.14 C661.00,124.13 662.00,125.13 663.00,126.15 C664.00,127.16 665.00,128.18 666.00,129.22 C667.00,130.25 668.00,131.29 669.00,132.35 C670.00,133.40 671.50,135.01 672.00,135.54" fill="none" stroke="#40d8f0" stroke-width="2.0" stroke-linejoin="round" opacity="1"/>
<path d="M462.00,35.50 C465.00,35.56 476.50,35.73 480.00,35.84 C483.50,35.94 482.00,36.02 483.00,36.11 C484.00,36.21 485.00,36.32 486.00,36.42 C487.00,36.53 488.00,36.64 489.00,36.76 C490.00,36.88 491.00,37.00 492.00,37.13 C493.00,37.26 494.00,37.39 495.00,37.53 C496.00,37.67 497.00,37.81 498.00,37.96 C499.00,38.11 500.00,38.26 501.00,38.42 C502.00,38.58 503.00,38.75 504.00,38.92 C505.00,39.09 506.00,39.27 507.00,39.45 C508.00,39.63 509.00,39.82 510.00,40.01 C511.00,40.20 512.00,40.40 513.00,40.61 C514.00,40.81 515.00,41.02 516.00,41.24 C517.00,41.45 518.00,41.68 519.00,41.90 C520.00,42.13 521.00,42.36 522.00,42.60 C523.00,42.84 524.00,43.09 525.00,43.34 C526.00,43.60 527.00,43.85 528.00,44.12 C529.00,44.38 530.00,44.65 531.00,44.93 C532.00,45.21 533.00,45.49 534.00,45.78 C535.00,46.07 536.00,46.37 537.00,46.67 C538.00,46.97 539.00,47.28 540.00,47.60 C541.00,47.92 542.00,48.24 543.00,48.57 C544.00,48.90 545.00,49.23 546.00,49.58 C547.00,49.92 548.00,50.27 549.00,50.62 C550.00,50.98 551.00,51.34 552.00,51.71 C553.00,52.08 554.00,52.46 555.00,52.85 C556.00,53.23 557.00,53.62 558.00,54.02 C559.00,54.42 560.00,54.83 561.00,55.24 C562.00,55.65 563.00,56.07 564.00,56.50 C565.00,56.93 566.00,57.36 567.00,57.80 C568.00,58.25 569.00,58.70 570.00,59.15 C571.00,59.61 572.00,60.08 573.00,60.55 C574.00,61.02 575.00,61.50 576.00,61.99 C577.00,62.48 578.00,62.97 579.00,63.48 C580.00,63.98 581.00,64.49 582.00,65.01 C583.00,65.53 584.00,66.06 585.00,66.59 C586.00,67.13 587.00,67.67 588.00,68.22 C589.00,68.77 590.00,69.33 591.00,69.90 C592.00,70.47 593.00,71.04 594.00,71.63 C595.00,72.21 596.00,72.80 597.00,73.40 C598.00,74.00 599.00,74.61 600.00,75.23 C601.00,75.85 602.00,76.47 603.00,77.11 C604.00,77.74 605.00,78.38 606.00,79.03 C607.00,79.69 608.00,80.35 609.00,81.01 C610.00,81.68 611.00,82.36 612.00,83.05 C613.00,83.73 614.00,84.43 615.00,85.13 C616.00,85.84 617.00,86.55 618.00,87.27 C619.00,87.99 620.00,88.72 621.00,89.46 C622.00,90.20 623.00,90.95 624.00,91.71 C625.00,92.47 626.00,93.24 627.00,94.01 C628.00,94.79 629.00,95.58 630.00,96.37 C631.00,97.17 632.00,97.97 633.00,98.79 C634.00,99.60 635.00,100.42 636.00,101.26 C637.00,102.09 638.00,102.93 639.00,103.79 C640.00,104.64 641.00,105.50 642.00,106.37 C643.00,107.25 644.00,108.13 645.00,109.02 C646.00,109.91 647.00,110.81 648.00,111.72 C649.00,112.63 650.00,113.55 651.00,114.49 C652.00,115.42 653.00,116.36 654.00,117.31 C655.00,118.26 656.00,119.22 657.00,120.19 C658.00,121.17 659.00,122.15 660.00,123.14 C661.00,124.13 662.00,125.13 663.00,126.15 C664.00,127.16 665.00,128.18 666.00,129.22 C667.00,130.25 668.00,131.29 669.00,132.35 C670.00,133.40 671.50,135.01 672.00,135.54" fill="none" stroke="#b048f0" stroke-width="1.4" stroke-dasharray="4,1.2" stroke-linejoin="round" opacity="1"/>
<path d="M560.00,53.93 C560.50,54.12 562.00,54.69 563.00,55.09 C564.00,55.48 565.00,55.88 566.00,56.29 C567.00,56.70 568.00,57.12 569.00,57.54 C570.00,57.97 571.00,58.40 572.00,58.84 C573.00,59.28 574.00,59.73 575.00,60.19 C576.00,60.64 577.00,61.11 578.00,61.58 C579.00,62.05 580.00,62.53 581.00,63.02 C582.00,63.51 583.00,64.00 584.00,64.50 C585.00,65.01 586.00,65.52 587.00,66.03 C588.00,66.55 589.00,67.08 590.00,67.61 C591.00,68.14 592.00,68.68 593.00,69.23 C594.00,69.78 595.00,70.33 596.00,70.90 C597.00,71.46 598.00,72.03 599.00,72.60 C600.00,73.18 601.00,73.77 602.00,74.36 C603.00,74.95 604.00,75.55 605.00,76.16 C606.00,76.76 607.00,77.37 608.00,78.00 C609.00,78.62 610.00,79.24 611.00,79.88 C612.00,80.51 613.00,81.15 614.00,81.80 C615.00,82.45 616.00,83.11 617.00,83.77 C618.00,84.43 619.00,85.10 620.00,85.78 C621.00,86.46 622.00,87.14 623.00,87.83 C624.00,88.52 625.00,89.22 626.00,89.92 C627.00,90.63 628.00,91.34 629.00,92.06 C630.00,92.77 631.00,93.50 632.00,94.23 C633.00,94.96 634.00,95.70 635.00,96.44 C636.00,97.19 637.00,97.94 638.00,98.69 C639.00,99.45 640.00,100.22 641.00,100.99 C642.00,101.76 643.00,102.53 644.00,103.32 C645.00,104.10 646.00,104.89 647.00,105.69 C648.00,106.48 649.00,107.29 650.00,108.09 C651.00,108.90 652.00,109.72 653.00,110.54 C654.00,111.36 655.00,112.19 656.00,113.02 C657.00,113.86 658.00,114.70 659.00,115.54 C660.00,116.39 661.00,117.24 662.00,118.10 C663.00,118.96 664.00,119.82 665.00,120.70 C666.00,121.57 667.00,122.44 668.00,123.33 C669.00,124.21 670.00,125.10 671.00,125.99 C672.00,126.89 673.00,127.79 674.00,128.69 C675.00,129.60 676.00,130.51 677.00,131.43 C678.00,132.35 679.50,133.74 680.00,134.20" fill="none" stroke="#d0d0d0" stroke-width="1" stroke-dasharray="3,2.5" stroke-linejoin="round" opacity="1"/>
<line x1="790" y1="64" x2="800" y2="64" stroke="#777" stroke-dasharray="1,1.5"/>
<line x1="790" y1="115.5" x2="800" y2="115.5" stroke="#777" stroke-dasharray="1,1.5"/>
<line x1="790" y1="100" x2="800" y2="100" stroke="#20c020" stroke-width="1.5"/>
<path d="M796,71 L798,72.5 L800,73" stroke="#a0c020" stroke-width="1.5" fill="none"/>
<path d="M790.00,102.50 C790.83,102.92 793.33,104.25 795.00,105.00 C796.67,105.75 799.17,106.67 800.00,107.00" fill="none" stroke="#d03030" stroke-width="1.2" stroke-linejoin="round" opacity="1"/>
<path d="M792.00,104.00 C793.33,104.58 798.67,106.92 800.00,107.50" fill="none" stroke="#40a0c0" stroke-width="1" stroke-linejoin="round" opacity="1"/>
<line x1="28" y1="414.5" x2="104" y2="414.5" stroke="#808080" stroke-dasharray="1,1.5"/>
<line x1="108" y1="414.5" x2="329" y2="414.5" stroke="#808080" stroke-dasharray="1,1.5"/>
<line x1="42.5" y1="405" x2="42.5" y2="440" stroke="#808080" stroke-dasharray="1,1.5"/>
<line x1="170" y1="405" x2="170" y2="440" stroke="#808080" stroke-dasharray="1,1.5"/>
<line x1="234" y1="405" x2="234" y2="440" stroke="#808080" stroke-dasharray="1,1.5"/>
<line x1="298" y1="405" x2="298" y2="440" stroke="#808080" stroke-dasharray="1,1.5"/>
<line x1="106" y1="404" x2="106" y2="440" stroke="#b0b0b0" stroke-width="1.2"/>
<line x1="102" y1="414.5" x2="106" y2="414.5" stroke="#b0b0b0"/>
<text x="97.8" y="417.2" font-size="9.5" fill="#e8e8e8" text-anchor="end" textLength="9.8" lengthAdjust="spacingAndGlyphs" stroke="#e8e8e8" stroke-width="0.1" >22</text>
<text x="97.8" y="443.2" font-size="9.5" fill="#e8e8e8" text-anchor="end" textLength="9.8" lengthAdjust="spacingAndGlyphs" stroke="#e8e8e8" stroke-width="0.1" >20</text>
<text x="101" y="400.8" font-size="9.5" fill="#e8e8e8" text-anchor="start" textLength="24" lengthAdjust="spacingAndGlyphs" stroke="#e8e8e8" stroke-width="0.1" >CL/CD</text>
<path d="M150.05,447.90 L151.95,446.97 L153.87,446.06 L155.81,445.17 L157.77,444.32 L159.75,443.49 L161.75,442.69 L163.76,441.91 L165.79,441.17 L167.83,440.45 L169.89,439.77 L171.97,439.11 L174.05,438.48 L176.15,437.89 L178.26,437.33 L180.38,436.80 L182.50,436.30 L184.64,435.83 L186.78,435.40 L188.94,435.01 L191.09,434.65 L193.25,434.32 L195.42,434.03 L197.59,433.78 L199.76,433.56 L201.94,433.38 L204.12,433.24 L206.29,433.14 L208.47,433.07 L210.64,433.05 L212.81,433.06 L214.98,433.12 L217.14,433.21 L219.30,433.35 L221.46,433.53 L223.60,433.75 L225.74,434.02 L227.88,434.33 L230.00,434.68 L232.11,435.08 L234.21,435.52 L236.30,436.01 L238.38,436.55 L240.45,437.13 L242.50,437.75 L244.53,438.43 L246.55,439.16 L248.56,439.93 L250.54,440.75 L252.51,441.62 L254.46,442.55 L256.39,443.52 L258.30,444.54 L260.18,445.62" fill="none" stroke="#c01010" stroke-width="1.3" stroke-linejoin="round" opacity="1"/>
<path d="M137.50,441.26 L138.88,439.29 L140.32,437.42 L141.80,435.64 L143.32,433.96 L144.89,432.37 L146.50,430.87 L148.15,429.46 L149.84,428.14 L151.56,426.90 L153.32,425.74 L155.12,424.66 L156.94,423.66 L158.80,422.74 L160.69,421.89 L162.60,421.11 L164.54,420.41 L166.50,419.78 L168.48,419.21 L170.49,418.71 L172.51,418.28 L174.55,417.90 L176.61,417.59 L178.68,417.34 L180.77,417.14 L182.87,416.99 L184.97,416.90 L187.09,416.86 L189.21,416.87 L191.33,416.93 L193.46,417.03 L195.59,417.18 L197.72,417.37 L199.85,417.59 L201.98,417.86 L204.10,418.16 L206.22,418.50 L208.32,418.87 L210.43,419.27 L212.52,419.71 L214.61,420.17 L216.69,420.67 L218.76,421.19 L220.82,421.74 L222.88,422.33 L224.92,422.93 L226.96,423.57 L229.00,424.23 L231.02,424.91 L233.04,425.62 L235.04,426.35 L237.04,427.11 L239.03,427.89 L241.01,428.68 L242.98,429.50 L244.95,430.34 L246.90,431.19 L248.85,432.07 L250.78,432.96 L252.71,433.86 L254.62,434.79 L256.53,435.72 L258.43,436.68 L260.31,437.64 L262.19,438.62 L264.06,439.61 L265.92,440.61 L267.76,441.62 L269.60,442.64 L271.42,443.67 L273.24,444.71 L275.04,445.75" fill="none" stroke="#3a9ab8" stroke-width="1.6" stroke-linejoin="round" opacity="1"/>
<path d="M189.84,405.88 L191.65,405.42 L193.46,405.02 L195.25,404.66 L197.04,404.35 L198.82,404.09 L200.60,403.88 L202.37,403.72 L204.13,403.60 L205.88,403.52 L207.63,403.49 L209.37,403.50 L211.11,403.56 L212.84,403.65 L214.56,403.78 L216.27,403.96 L217.98,404.17 L219.68,404.41 L221.38,404.70 L223.07,405.01 L224.75,405.36 L226.43,405.75 L228.10,406.16 L229.77,406.61 L231.43,407.08 L233.08,407.59 L234.73,408.12 L236.37,408.68 L238.00,409.26 L239.63,409.87 L241.26,410.51 L242.87,411.16 L244.49,411.84 L246.10,412.54 L247.70,413.26 L249.29,414.00 L250.88,414.75 L252.47,415.52 L254.05,416.31 L255.63,417.11 L257.20,417.93 L258.76,418.76 L260.32,419.60 L261.88,420.45 L263.43,421.32 L264.97,422.19 L266.51,423.07 L268.05,423.95 L269.58,424.84 L271.10,425.74 L272.62,426.64 L274.14,427.54 L275.65,428.45 L277.16,429.36 L278.66,430.26 L280.16,431.17 L281.66,432.07 L283.15,432.97 L284.63,433.87 L286.11,434.76 L287.59,435.64 L289.06,436.52 L290.53,437.39 L292.00,438.25 L293.46,439.11 L294.92,439.95" fill="none" stroke="#e0e0e0" stroke-width="1" stroke-linejoin="round" opacity="1"/>
<path d="M180.03,411.39 L183.64,411.08 L187.26,410.86 L190.90,410.73 L194.56,410.70 L198.22,410.75 L201.90,410.90 L205.57,411.15 L209.25,411.48 L212.92,411.90 L216.58,412.42 L220.23,413.03 L223.87,413.74 L227.49,414.53 L231.09,415.42 L234.66,416.40 L238.21,417.48 L241.72,418.64 L245.19,419.90 L248.63,421.25 L252.02,422.70 L255.37,424.23 L258.67,425.86 L261.91,427.58 L265.10,429.40 L268.22,431.31 L271.28,433.31 L274.27,435.40 L277.20,437.58 L280.04,439.86" fill="none" stroke="#88aa33" stroke-width="1.5" stroke-linejoin="round" opacity="1"/>
<path d="M127.50,441.50 L129.09,439.45 L130.72,437.47 L132.38,435.56 L134.09,433.72 L135.83,431.96 L137.61,430.26 L139.42,428.62 L141.27,427.06 L143.15,425.57 L145.06,424.14 L147.00,422.78 L148.97,421.48 L150.96,420.25 L152.99,419.08 L155.04,417.98 L157.11,416.94 L159.21,415.96 L161.32,415.05 L163.46,414.20 L165.62,413.40 L167.80,412.67 L169.99,412.00 L172.21,411.39 L174.43,410.84 L176.67,410.35 L178.93,409.91 L181.19,409.54 L183.47,409.22 L185.75,408.95 L188.04,408.74 L190.34,408.59 L192.65,408.49 L194.96,408.45 L197.28,408.45 L199.59,408.51 L201.91,408.63 L204.23,408.79 L206.55,409.01 L208.86,409.28 L211.18,409.60 L213.48,409.96 L215.79,410.38 L218.09,410.84 L220.38,411.34 L222.67,411.89 L224.95,412.49 L227.22,413.12 L229.49,413.80 L231.75,414.51 L234.00,415.26 L236.24,416.05 L238.47,416.87 L240.69,417.73 L242.90,418.62 L245.10,419.54 L247.29,420.49 L249.46,421.47 L251.63,422.48 L253.78,423.52 L255.91,424.58 L258.03,425.66 L260.14,426.77 L262.23,427.89 L264.30,429.04 L266.36,430.21 L268.41,431.39 L270.43,432.59 L272.44,433.80 L274.43,435.03 L276.40,436.27 L278.35,437.53 L280.28,438.79 L282.18,440.06 L284.07,441.34 L285.94,442.62 L287.79,443.91 L289.61,445.20" fill="none" stroke="#ffff00" stroke-width="2.2" stroke-linejoin="round" opacity="1"/>
<path d="M135.46,442.02 L136.88,440.49 L138.33,438.97 L139.81,437.46 L141.32,435.96 L142.85,434.47 L144.41,433.01 L146.00,431.56 L147.62,430.13 L149.25,428.72 L150.92,427.34 L152.61,425.99 L154.32,424.67 L156.06,423.38 L157.82,422.12 L159.60,420.90 L161.40,419.72 L163.23,418.58 L165.08,417.48 L166.94,416.42 L168.83,415.42 L170.73,414.46 L172.66,413.55 L174.60,412.70 L176.56,411.90 L178.54,411.17 L180.53,410.49 L182.54,409.87 L184.57,409.31 L186.61,408.82 L188.66,408.38 L190.72,408.01 L192.79,407.69 L194.87,407.43 L196.96,407.22 L199.05,407.08 L201.15,406.99 L203.25,406.95 L205.36,406.97 L207.46,407.04 L209.56,407.16 L211.67,407.34 L213.76,407.56 L215.86,407.84 L217.95,408.17 L220.03,408.54 L222.10,408.97 L224.17,409.44 L226.22,409.96 L228.27,410.52 L230.31,411.13 L232.33,411.77 L234.35,412.46 L236.36,413.18 L238.35,413.94 L240.34,414.73 L242.31,415.55 L244.28,416.41 L246.23,417.29 L248.17,418.21 L250.10,419.14 L252.02,420.10 L253.93,421.09 L255.82,422.09 L257.71,423.11 L259.58,424.15 L261.44,425.21 L263.29,426.28 L265.13,427.36 L266.95,428.45 L268.77,429.55 L270.58,430.66 L272.38,431.77 L274.18,432.89 L275.96,434.01 L277.74,435.13 L279.52,436.26 L281.29,437.38 L283.06,438.49 L284.82,439.60 L286.58,440.71 L288.34,441.80 L290.10,442.89 L291.85,443.97" fill="none" stroke="#40d8f0" stroke-width="2.2" stroke-linejoin="round" opacity="1"/>
<path d="M135.46,442.02 L136.88,440.49 L138.33,438.97 L139.81,437.46 L141.32,435.96 L142.85,434.47 L144.41,433.01 L146.00,431.56 L147.62,430.13 L149.25,428.72 L150.92,427.34 L152.61,425.99 L154.32,424.67 L156.06,423.38 L157.82,422.12 L159.60,420.90 L161.40,419.72 L163.23,418.58 L165.08,417.48 L166.94,416.42 L168.83,415.42 L170.73,414.46 L172.66,413.55 L174.60,412.70 L176.56,411.90 L178.54,411.17 L180.53,410.49 L182.54,409.87 L184.57,409.31 L186.61,408.82 L188.66,408.38 L190.72,408.01 L192.79,407.69 L194.87,407.43 L196.96,407.22 L199.05,407.08 L201.15,406.99 L203.25,406.95 L205.36,406.97 L207.46,407.04 L209.56,407.16 L211.67,407.34 L213.76,407.56 L215.86,407.84 L217.95,408.17 L220.03,408.54 L222.10,408.97 L224.17,409.44 L226.22,409.96 L228.27,410.52 L230.31,411.13 L232.33,411.77 L234.35,412.46 L236.36,413.18 L238.35,413.94 L240.34,414.73 L242.31,415.55 L244.28,416.41 L246.23,417.29 L248.17,418.21 L250.10,419.14 L252.02,420.10 L253.93,421.09 L255.82,422.09 L257.71,423.11 L259.58,424.15 L261.44,425.21 L263.29,426.28 L265.13,427.36 L266.95,428.45 L268.77,429.55 L270.58,430.66 L272.38,431.77 L274.18,432.89 L275.96,434.01 L277.74,435.13 L279.52,436.26 L281.29,437.38 L283.06,438.49 L284.82,439.60 L286.58,440.71 L288.34,441.80 L290.10,442.89 L291.85,443.97" fill="none" stroke="#b048f0" stroke-width="1.4" stroke-dasharray="4,1.5" stroke-linejoin="round" opacity="1"/>
<rect x="340" y="134" width="460" height="304" fill="#5e91cd"/>
<rect x="340" y="134" width="460" height="1" fill="#243c5c"/>
<rect x="340" y="134" width="1" height="304" fill="#4a78b0"/>
<rect x="340" y="437" width="460" height="1" fill="#4a78b0"/>
<rect x="346" y="159" width="448" height="273" fill="#f0f0f0"/>
<text x="531.5" y="151" font-size="13" fill="#2a3a4c" text-anchor="start" textLength="77" lengthAdjust="spacingAndGlyphs" stroke="#2a3a4c" stroke-width="0.05" >Graph Settings</text>
<path d="M349.6,140 L360.2,140 L359.7,142.8 L352.6,142.8 L352.2,145 C353.5,144.6 355.8,144.4 357.8,145.2 C359.8,146 360.6,147.6 360.4,149.4 C360.1,151.2 358.6,152.3 355.6,152.4 L348.6,152.4 L349,149.8 L353.6,149.8 C355.2,149.8 356.4,149.2 356.5,148.2 C356.6,147.2 355.6,146.8 354.2,146.8 C352.6,146.8 351.2,147.2 350.2,147.6 L348.6,147.2 Z" fill="url(#icon)"/>
<path d="M350,146.6 L354.4,151.8 M354.4,146.6 L350,151.8" stroke="#fff" stroke-width="1.7"/>
<rect x="340" y="158" width="460" height="1" fill="#5080bb"/>
<text x="745.8" y="147" font-size="11" fill="#222" text-anchor="start" textLength="5.6" lengthAdjust="spacingAndGlyphs" stroke="#222" stroke-width="0.12" font-weight="bold">?</text>
<rect x="759.5" y="135" width="35.5" height="16" fill="#c75050"/>
<path d="M774.8,140.8 L780.6,146.6 M780.6,140.8 L774.8,146.6" stroke="#fff" stroke-width="1.4"/>
<rect x="355.5" y="184.5" width="428" height="214" fill="#fff" stroke="#c9c9c9"/>
<rect x="357.5" y="170.5" width="51" height="14" fill="url(#tabg)" stroke="#b6b6b6"/>
<text x="364" y="180.5" font-size="9.2" fill="#1a1a1a" text-anchor="start" textLength="35" lengthAdjust="spacingAndGlyphs" stroke="#1a1a1a" stroke-width="0.12" >Variables</text>
<rect x="408.5" y="170.5" width="43" height="14" fill="url(#tabg)" stroke="#b6b6b6"/>
<text x="417.2" y="180.5" font-size="9.2" fill="#1a1a1a" text-anchor="start" textLength="24.3" lengthAdjust="spacingAndGlyphs" stroke="#1a1a1a" stroke-width="0.12" >Scales</text>
<rect x="451.5" y="170.5" width="72" height="14" fill="url(#tabg)" stroke="#b6b6b6"/>
<text x="460.6" y="180.5" font-size="9.2" fill="#1a1a1a" text-anchor="start" textLength="54" lengthAdjust="spacingAndGlyphs" stroke="#1a1a1a" stroke-width="0.12" >Axis and Grids</text>
<path d="M523.5,184.5 V168.5 H629.5 V184.5" fill="#fff" stroke="#c4c4c4"/>
<rect x="524" y="183" width="105" height="3" fill="#fff"/>
<text x="533" y="179.6" font-size="9.2" fill="#1a1a1a" text-anchor="start" textLength="87" lengthAdjust="spacingAndGlyphs" stroke="#1a1a1a" stroke-width="0.12" >Fonts and BackGround</text>
<rect x="364.5" y="197.5" width="410" height="77" fill="none" stroke="#dcdcdc"/>
<rect x="368" y="193" width="26" height="8" fill="#fff"/>
<text x="370.4" y="200.6" font-size="9.2" fill="#1a1a1a" text-anchor="start" textLength="22" lengthAdjust="spacingAndGlyphs" stroke="#1a1a1a" stroke-width="0.12" >Fonts</text>
<rect x="364.5" y="285.5" width="410" height="56" fill="none" stroke="#dcdcdc"/>
<rect x="368" y="281" width="50" height="8" fill="#fff"/>
<text x="370.6" y="288.2" font-size="9.2" fill="#1a1a1a" text-anchor="start" textLength="45" lengthAdjust="spacingAndGlyphs" stroke="#1a1a1a" stroke-width="0.12" >BackGround</text>
<rect x="364.5" y="353.5" width="410" height="35" fill="none" stroke="#dcdcdc"/>
<rect x="368" y="349" width="35" height="8" fill="#fff"/>
<text x="370.4" y="355.8" font-size="9.2" fill="#1a1a1a" text-anchor="start" textLength="30.5" lengthAdjust="spacingAndGlyphs" stroke="#1a1a1a" stroke-width="0.12" >Padding</text>
<text x="420" y="219.8" font-size="9.2" fill="#1a1a1a" text-anchor="start" textLength="17.5" lengthAdjust="spacingAndGlyphs" stroke="#1a1a1a" stroke-width="0.12" >Font</text>
<text x="606.5" y="219.5" font-size="9.2" fill="#1a1a1a" text-anchor="start" textLength="19.5" lengthAdjust="spacingAndGlyphs" stroke="#1a1a1a" stroke-width="0.12" >Color</text>
<text x="375.2" y="238.9" font-size="9.2" fill="#1a1a1a" text-anchor="start" textLength="16" lengthAdjust="spacingAndGlyphs" stroke="#1a1a1a" stroke-width="0.12" >Title</text>
<text x="371.5" y="261.5" font-size="9.2" fill="#1a1a1a" text-anchor="start" textLength="19.5" lengthAdjust="spacingAndGlyphs" stroke="#1a1a1a" stroke-width="0.12" >Label</text>
<rect x="397.5" y="227.5" width="64" height="16" fill="url(#fbox)" stroke="#7eb4ea"/>
<rect x="397.5" y="250.5" width="64" height="16" fill="url(#fbox)" stroke="#adadad"/>
<text x="399" y="239" font-size="9.8" fill="#1a1a1a" text-anchor="start" textLength="60" lengthAdjust="spacingAndGlyphs" stroke="#1a1a1a" stroke-width="0.12" >MS Shell Dlg 2 8</text>
<text x="399" y="262" font-size="9.8" fill="#1a1a1a" text-anchor="start" textLength="60" lengthAdjust="spacingAndGlyphs" stroke="#1a1a1a" stroke-width="0.12" >MS Shell Dlg 2 8</text>
<rect x="467.5" y="228" width="299" height="14.5" rx="5" fill="#fff" stroke="#cdcdcd" stroke-width="1.6"/>
<rect x="467.5" y="250.5" width="299" height="14.5" rx="5" fill="#fff" stroke="#cdcdcd" stroke-width="1.6"/>
<text x="593.8" y="237.8" font-size="10" fill="#333" text-anchor="start" textLength="47.5" lengthAdjust="spacingAndGlyphs" >Title Color</text>
<text x="591.9" y="261" font-size="10" fill="#333" text-anchor="start" textLength="49.2" lengthAdjust="spacingAndGlyphs" >Label Color</text>
<text x="613" y="311" font-size="9.2" fill="#1a1a1a" text-anchor="start" textLength="70" lengthAdjust="spacingAndGlyphs" stroke="#1a1a1a" stroke-width="0.12" >Graph Background</text>
<rect x="688.5" y="298.5" width="79" height="17" rx="2" fill="#fff" stroke="#5a5a5a"/>
<rect x="614.5" y="322.5" width="10" height="10" fill="#fff" stroke="#8a8a8a"/>
<path d="M616.5,327.5 L619,330.5 L623,324" fill="none" stroke="#111" stroke-width="1.6"/>
<text x="628.2" y="330.5" font-size="9.2" fill="#1a1a1a" text-anchor="start" textLength="49.5" lengthAdjust="spacingAndGlyphs" stroke="#1a1a1a" stroke-width="0.12" >Graph Border</text>
<rect x="691" y="326" width="74" height="3" fill="#c8c8c8"/>
<text x="604.9" y="377.5" font-size="9.2" fill="#1a1a1a" text-anchor="start" textLength="25.5" lengthAdjust="spacingAndGlyphs" stroke="#1a1a1a" stroke-width="0.12" >Margin</text>
<rect x="635.5" y="366.5" width="105" height="15" fill="#fff" stroke="#b8b8b8"/>
<text x="728.8" y="377.5" font-size="9.2" fill="#1a1a1a" text-anchor="start" textLength="8.8" lengthAdjust="spacingAndGlyphs" stroke="#1a1a1a" stroke-width="0.12" >50</text>
<text x="745.7" y="377.5" font-size="9.2" fill="#1a1a1a" text-anchor="start" textLength="21.5" lengthAdjust="spacingAndGlyphs" stroke="#1a1a1a" stroke-width="0.12" >pixels</text>
<rect x="392.5" y="406.5" width="57" height="16" fill="url(#btng)" stroke="#b4b4b4"/>
<text x="404.7" y="418" font-size="9.2" fill="#1a1a1a" text-anchor="start" textLength="30" lengthAdjust="spacingAndGlyphs" stroke="#1a1a1a" stroke-width="0.12" >Restore</text>
<rect x="492.5" y="406.5" width="57" height="16" fill="url(#btng)" stroke="#b4b4b4"/>
<text x="509.7" y="418" font-size="9.2" fill="#1a1a1a" text-anchor="start" textLength="21.5" lengthAdjust="spacingAndGlyphs" stroke="#1a1a1a" stroke-width="0.12" >Apply</text>
<rect x="591.5" y="406.5" width="57" height="16" fill="url(#btng)" stroke="#b4b4b4"/>
<text x="613.8" y="418" font-size="9.2" fill="#1a1a1a" text-anchor="start" textLength="11" lengthAdjust="spacingAndGlyphs" stroke="#1a1a1a" stroke-width="0.12" >OK</text>
<rect x="691.5" y="406.5" width="57" height="16" fill="url(#btng)" stroke="#b4b4b4"/>
<text x="706.9" y="418" font-size="9.2" fill="#1a1a1a" text-anchor="start" textLength="25.5" lengthAdjust="spacingAndGlyphs" stroke="#1a1a1a" stroke-width="0.12" >Cancel</text>
<rect x="340" y="438" width="460" height="2" fill="#000"/>
<line x1="380" y1="439.5" x2="790" y2="439.5" stroke="#707070" stroke-dasharray="1,1.5"/>
<rect x="369" y="438" width="2" height="2" fill="#d0d0d0"/>
<rect x="778" y="438" width="3" height="2" fill="#a01010"/>
<rect x="783" y="438" width="3" height="2" fill="#40a0c0"/>
<rect x="787" y="438" width="3" height="2" fill="#80c040"/>
</svg>
</body></html>
